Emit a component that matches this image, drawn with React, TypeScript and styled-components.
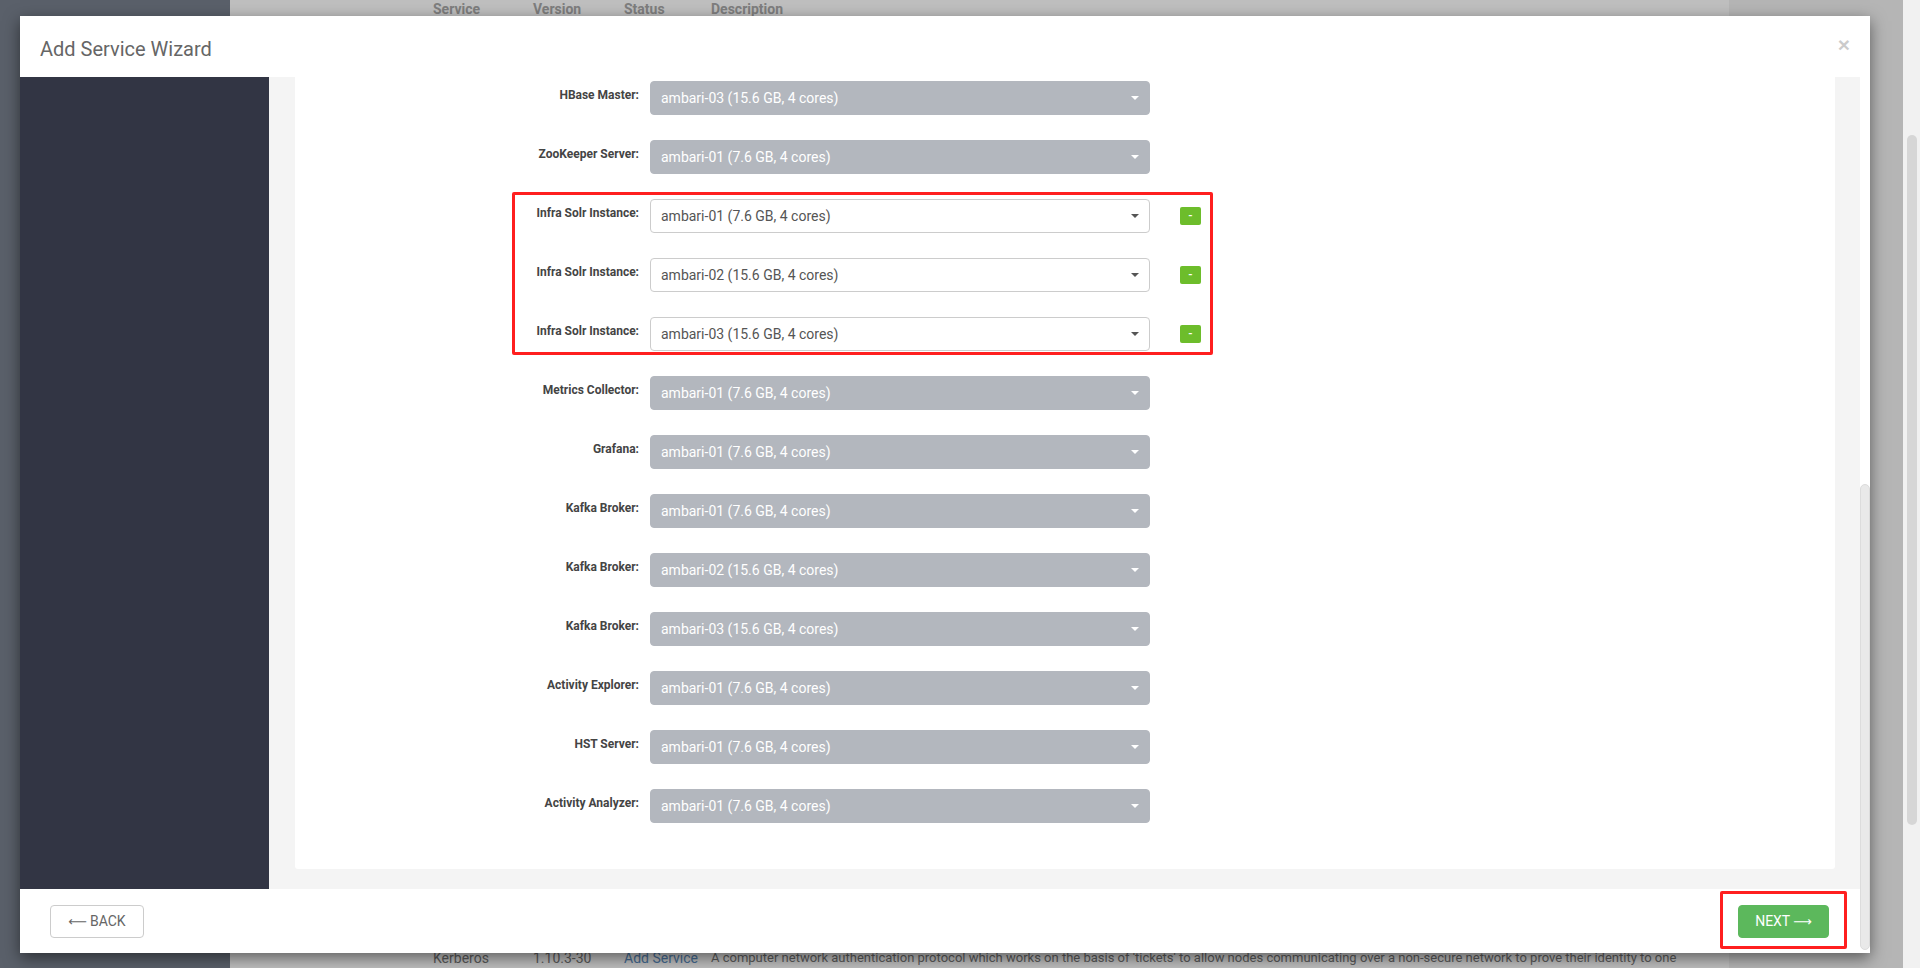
import React from 'react';
import styled, { createGlobalStyle, css } from 'styled-components';

const Global = createGlobalStyle`
  html, body { margin: 0; padding: 0; width: 100%; height: 100%; overflow: hidden; }
  body { font-family: Roboto, "Liberation Sans", Arial, sans-serif; }
  #root { height: 100%; }
  * { box-sizing: border-box; }
`;

const Screen = styled.div`
  display: flex;
  width: 1920px;
  height: 968px;
  overflow: hidden;
`;

const Viewport = styled.div`
  position: relative;
  flex: 1;
  display: flex;
  overflow: hidden;
`;

const Nav = styled.div`
  width: 230px;
  flex-shrink: 0;
  background: #78808e;
`;

const PageMain = styled.div`
  flex: 1;
  background: #fff;
  display: flex;
  flex-direction: column;
`;

const Gutter = styled.div`
  width: 174px;
  flex-shrink: 0;
  background: #f2f2f2;
`;

const TableHead = styled.div`
  display: grid;
  grid-template-columns: 100px 91px 87px 990px;
  padding-left: 203px;
  height: 19px;
  border-bottom: 1px solid #ccc;
  font-size: 14px;
  font-weight: 700;
  color: #a8a8a8;
  line-height: 14px;
  padding-top: 2px;
`;

const TableRow = styled.div`
  display: grid;
  grid-template-columns: 100px 91px 87px 990px;
  padding-left: 203px;
  margin-top: 930px;
  font-size: 14px;
  line-height: 20px;
  color: #7a7a7a;
`;

const RowLink = styled.span`
  color: #5d8fc4;
`;

const RowDescription = styled.span`
  font-size: 13px;
`;

const PageScroll = styled.div`
  width: 17px;
  flex-shrink: 0;
  background: #f1f1f1;
  padding: 135px 3px 0 4px;
`;

const PageThumb = styled.div`
  height: 690px;
  border-radius: 5px;
  background: #d6d6d6;
`;

const Backdrop = styled.div`
  position: absolute;
  inset: 0;
  background: rgba(0, 0, 0, 0.25);
  padding: 16px 0 0 20px;
`;

const Modal = styled.div`
  width: 1850px;
  height: 937px;
  background: #fff;
  box-shadow: 0 5px 15px rgba(0, 0, 0, 0.5);
  display: flex;
  flex-direction: column;
`;

const ModalHeader = styled.div`
  height: 61px;
  flex-shrink: 0;
  padding: 4px 20px 0;
  display: flex;
  align-items: center;
  justify-content: space-between;
`;

const Title = styled.h4`
  margin: 0;
  font-size: 20px;
  font-weight: 400;
  color: #666;
`;

const Close = styled.button`
  border: 0;
  background: none;
  padding: 0;
  margin-top: -8px;
  font-family: "Liberation Sans", Arial, sans-serif;
  font-size: 21px;
  font-weight: 700;
  line-height: 1;
  color: #000;
  opacity: 0.2;
`;

const ModalMain = styled.div`
  flex: 1;
  display: flex;
  min-height: 0;
`;

const MainColumn = styled.div`
  flex: 1;
  display: flex;
  flex-direction: column;
`;

const ModalScroll = styled.div`
  width: 10px;
  flex-shrink: 0;
  background: #fff;
  padding-top: 407px;
`;

const ModalThumb = styled.div`
  height: 466px;
  border-radius: 5px;
  background: #e9e9e9;
  border: 1px solid #dcdcdc;
`;

const Body = styled.div`
  flex: 1;
  display: flex;
`;

const Sidebar = styled.div`
  width: 249px;
  flex-shrink: 0;
  background: #323544;
`;

const Content = styled.div`
  flex: 1;
  background: #f4f4f4;
  padding: 0 25px 20px 26px;
  display: flex;
`;

const Panel = styled.div`
  flex: 1;
  background: #fff;
  border-radius: 0 0 3px 3px;
  padding-top: 4px;
  display: flex;
  flex-direction: column;
  gap: 25px;
`;

const Group = styled.div`
  position: relative;
  display: flex;
  flex-direction: column;
  gap: 25px;
`;

const Highlight = styled.div`
  position: absolute;
  top: -7px;
  bottom: -4px;
  left: 217px;
  width: 701px;
  border: 3px solid #ff1f1f;
  border-radius: 2px;
  pointer-events: none;
`;

const Row = styled.div`
  display: grid;
  grid-template-columns: 344px 500px auto;
  column-gap: 11px;
  align-items: start;
  height: 34px;
`;

const Label = styled.label`
  text-align: right;
  font-size: 12px;
  font-weight: 700;
  line-height: 17px;
  padding-top: 6px;
  color: #444;
`;

const SelectBox = styled.div<{ $disabled?: boolean }>`
  position: relative;
  height: 34px;
  display: flex;
  align-items: center;
  padding: 0 30px 0 10px;
  font-size: 14px;
  border-radius: 4px;
  white-space: nowrap;
  ${(p) =>
    p.$disabled
      ? css`
          background: #b3b7be;
          border: 1px solid #b3b7be;
          color: #fff;
        `
      : css`
          background: #fff;
          border: 1px solid #ccc;
          color: #555;
        `}
`;

const Caret = styled.span<{ $disabled?: boolean }>`
  margin-left: auto;
  margin-right: -20px;
  width: 0;
  height: 0;
  border-left: 4px solid transparent;
  border-right: 4px solid transparent;
  border-top: 4px solid ${(p) => (p.$disabled ? '#fff' : '#555')};
`;

const MinusButton = styled.button`
  margin-left: 19px;
  margin-top: 8px;
  width: 21px;
  height: 18px;
  padding: 0;
  border: 0;
  border-radius: 2px;
  background: #6dbd2b;
  color: #fff;
  font-family: Roboto, "Liberation Sans", Arial, sans-serif;
  font-size: 11px;
  font-weight: 700;
  line-height: 18px;
`;

const Footer = styled.div`
  height: 64px;
  flex-shrink: 0;
  padding: 0 31px 0 30px;
  display: flex;
  align-items: center;
  justify-content: space-between;
`;

const Btn = styled.button<{ $primary?: boolean }>`
  height: 33px;
  border-radius: 4px;
  font-family: Roboto, "Liberation Sans", Arial, sans-serif;
  font-size: 14px;
  text-transform: uppercase;
  padding: 0;
  display: inline-flex;
  align-items: center;
  justify-content: center;
  gap: 3px;
  ${(p) =>
    p.$primary
      ? css`
          width: 91px;
          background: #5cb85c;
          border: 1px solid #5cb85c;
          color: #fff;
        `
      : css`
          width: 94px;
          background: #fff;
          border: 1px solid #ccc;
          color: #666;
        `}
`;

const Arrow = styled.span`
  font-family: "DejaVu Sans", sans-serif;
  font-size: 13px;
  line-height: 1;
`;

const NextWrap = styled.div`
  position: relative;
  display: flex;
`;

const NextHighlight = styled.div`
  position: absolute;
  top: -14px;
  bottom: -11px;
  left: -18px;
  right: -18px;
  border: 3px solid #ff1f1f;
  border-radius: 2px;
  pointer-events: none;
`;

type Host = { name: string; host: string; editable?: boolean };

const before: Host[] = [
  { name: 'HBase Master:', host: 'ambari-03 (15.6 GB, 4 cores)' },
  { name: 'ZooKeeper Server:', host: 'ambari-01 (7.6 GB, 4 cores)' },
];

const solr: Host[] = [
  { name: 'Infra Solr Instance:', host: 'ambari-01 (7.6 GB, 4 cores)', editable: true },
  { name: 'Infra Solr Instance:', host: 'ambari-02 (15.6 GB, 4 cores)', editable: true },
  { name: 'Infra Solr Instance:', host: 'ambari-03 (15.6 GB, 4 cores)', editable: true },
];

const after: Host[] = [
  { name: 'Metrics Collector:', host: 'ambari-01 (7.6 GB, 4 cores)' },
  { name: 'Grafana:', host: 'ambari-01 (7.6 GB, 4 cores)' },
  { name: 'Kafka Broker:', host: 'ambari-01 (7.6 GB, 4 cores)' },
  { name: 'Kafka Broker:', host: 'ambari-02 (15.6 GB, 4 cores)' },
  { name: 'Kafka Broker:', host: 'ambari-03 (15.6 GB, 4 cores)' },
  { name: 'Activity Explorer:', host: 'ambari-01 (7.6 GB, 4 cores)' },
  { name: 'HST Server:', host: 'ambari-01 (7.6 GB, 4 cores)' },
  { name: 'Activity Analyzer:', host: 'ambari-01 (7.6 GB, 4 cores)' },
];

const ComponentRow: React.FC<{ item: Host }> = ({ item }) => (
  <Row>
    <Label>{item.name}</Label>
    <SelectBox role="combobox" aria-disabled={!item.editable} $disabled={!item.editable}>
      <span>{item.host}</span>
      <Caret $disabled={!item.editable} />
    </SelectBox>
    {item.editable && <MinusButton>-</MinusButton>}
  </Row>
);

export default function App() {
  return (
    <>
      <Global />
      <Screen>
        <Viewport>
          <Nav />
          <PageMain>
            <TableHead>
              <span>Service</span>
              <span>Version</span>
              <span>Status</span>
              <span>Description</span>
            </TableHead>
            <TableRow>
              <span>Kerberos</span>
              <span>1.10.3-30</span>
              <RowLink>Add Service</RowLink>
              <RowDescription>
                A computer network authentication protocol which works on the basis of 'tickets' to allow nodes
                communicating over a non-secure network to prove their identity to one
              </RowDescription>
            </TableRow>
          </PageMain>
          <Gutter />
          <Backdrop>
            <Modal>
              <ModalHeader>
                <Title>Add Service Wizard</Title>
                <Close>×</Close>
              </ModalHeader>
              <ModalMain>
                <MainColumn>
                  <Body>
                    <Sidebar />
                    <Content>
                      <Panel>
                        {before.map((h, i) => (
                          <ComponentRow key={'b' + i} item={h} />
                        ))}
                        <Group>
                          {solr.map((h, i) => (
                            <ComponentRow key={'s' + i} item={h} />
                          ))}
                          <Highlight />
                        </Group>
                        {after.map((h, i) => (
                          <ComponentRow key={'a' + i} item={h} />
                        ))}
                      </Panel>
                    </Content>
                  </Body>
                  <Footer>
                    <Btn>
                      <Arrow>⟵</Arrow>Back
                    </Btn>
                    <NextWrap>
                      <Btn $primary>
                        Next<Arrow>⟶</Arrow>
                      </Btn>
                      <NextHighlight />
                    </NextWrap>
                  </Footer>
                </MainColumn>
                <ModalScroll>
                  <ModalThumb />
                </ModalScroll>
              </ModalMain>
            </Modal>
          </Backdrop>
        </Viewport>
        <PageScroll>
          <PageThumb />
        </PageScroll>
      </Screen>
    </>
  );
}
